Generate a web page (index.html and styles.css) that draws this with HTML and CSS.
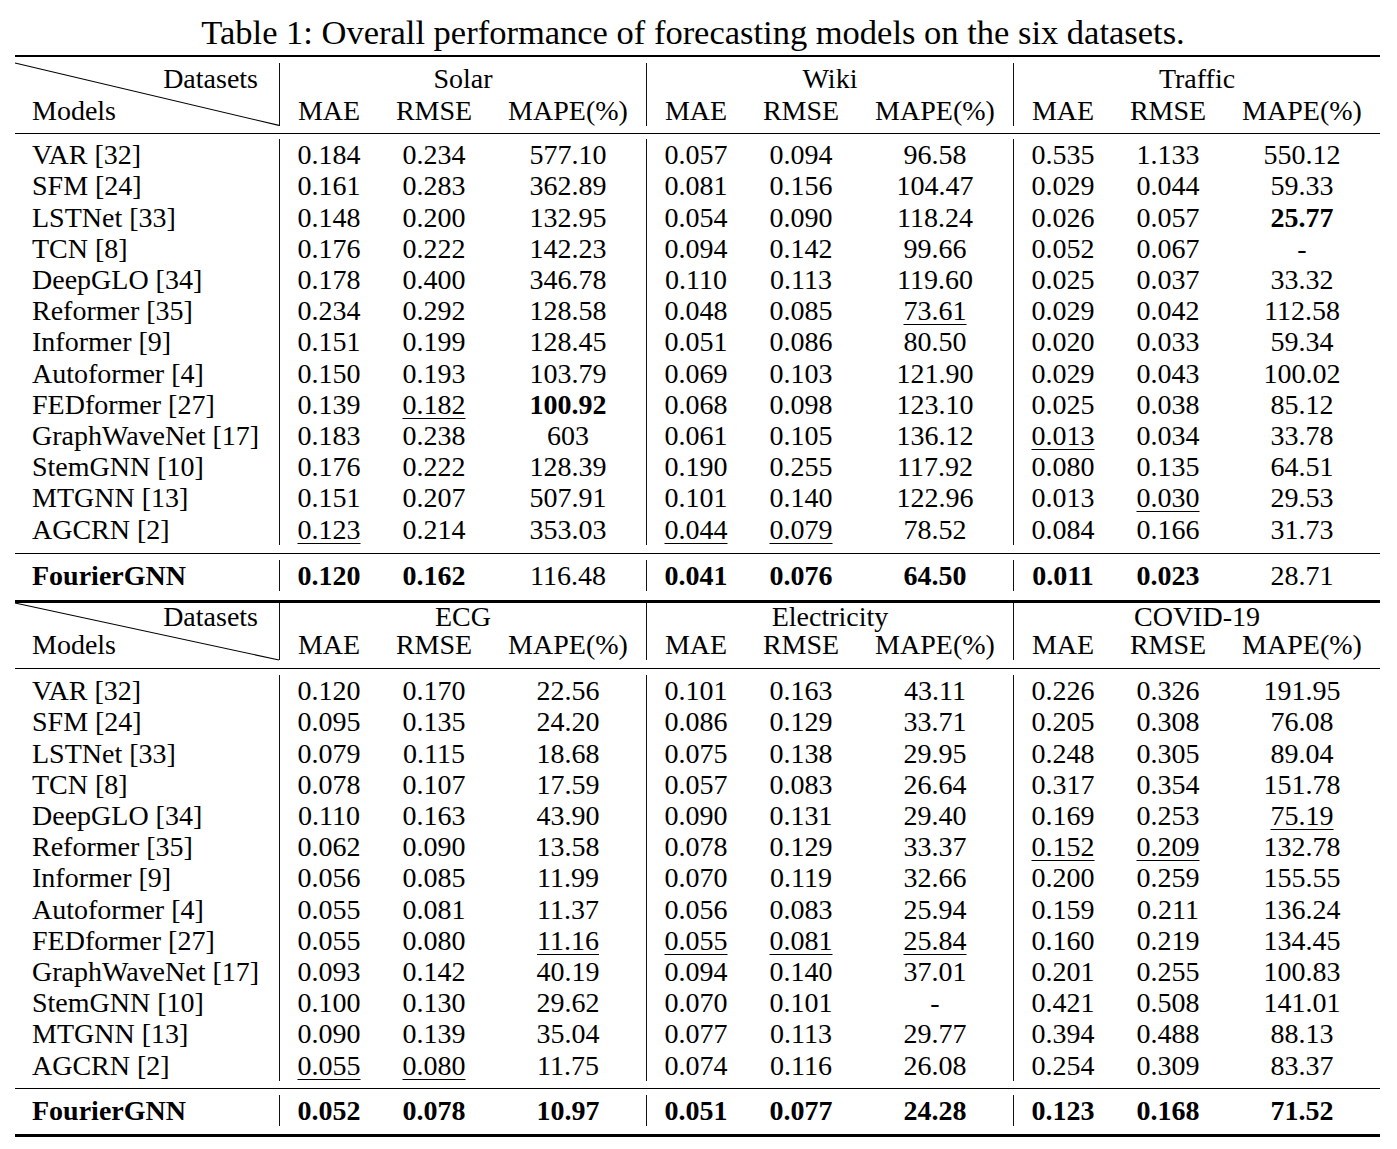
FILE: index.html
```html
<!DOCTYPE html>
<html>
<head>
<meta charset="utf-8">
<link rel="stylesheet" href="styles.css">
</head>
<body>
<div class="caption">Table 1: Overall performance of forecasting models on the six datasets.</div>
<table class="tbl">
<colgroup>
<col class="c-m"><col class="c-mae"><col class="c-rmse"><col class="c-mape"><col class="c-mae"><col class="c-rmse"><col class="c-mape"><col class="c-mae"><col class="c-rmse"><col class="c-mape">
</colgroup>
<tbody>
<tr class="rule thick"><td colspan="10"></td></tr>
<tr class="sp s6"><td colspan="10"></td></tr>
<tr class="hd"><td class="diag" rowspan="2"><svg class="diag-line" preserveAspectRatio="none" viewBox="0 0 100 100"><line x1="0" y1="0" x2="100" y2="100" vector-effect="non-scaling-stroke"/></svg><div class="d-top">Datasets</div><div class="d-bot">Models</div></td><td class="g" colspan="3">Solar</td><td class="g" colspan="3">Wiki</td><td class="g" colspan="3">Traffic</td></tr>
<tr class="hd"><td class="g">MAE</td><td>RMSE</td><td>MAPE(%)</td><td class="g">MAE</td><td>RMSE</td><td>MAPE(%)</td><td class="g">MAE</td><td>RMSE</td><td>MAPE(%)</td></tr>
<tr class="sp s7"><td colspan="10"></td></tr>
<tr class="rule thin"><td colspan="10"></td></tr>
<tr class="sp s5"><td colspan="10"></td></tr>
<tr><td class="m">VAR [32]</td><td class="g">0.184</td><td>0.234</td><td>577.10</td><td class="g">0.057</td><td>0.094</td><td>96.58</td><td class="g">0.535</td><td>1.133</td><td>550.12</td></tr>
<tr><td class="m">SFM [24]</td><td class="g">0.161</td><td>0.283</td><td>362.89</td><td class="g">0.081</td><td>0.156</td><td>104.47</td><td class="g">0.029</td><td>0.044</td><td>59.33</td></tr>
<tr><td class="m">LSTNet [33]</td><td class="g">0.148</td><td>0.200</td><td>132.95</td><td class="g">0.054</td><td>0.090</td><td>118.24</td><td class="g">0.026</td><td>0.057</td><td><b>25.77</b></td></tr>
<tr><td class="m">TCN [8]</td><td class="g">0.176</td><td>0.222</td><td>142.23</td><td class="g">0.094</td><td>0.142</td><td>99.66</td><td class="g">0.052</td><td>0.067</td><td>-</td></tr>
<tr><td class="m">DeepGLO [34]</td><td class="g">0.178</td><td>0.400</td><td>346.78</td><td class="g">0.110</td><td>0.113</td><td>119.60</td><td class="g">0.025</td><td>0.037</td><td>33.32</td></tr>
<tr><td class="m">Reformer [35]</td><td class="g">0.234</td><td>0.292</td><td>128.58</td><td class="g">0.048</td><td>0.085</td><td><span class="u">73.61</span></td><td class="g">0.029</td><td>0.042</td><td>112.58</td></tr>
<tr><td class="m">Informer [9]</td><td class="g">0.151</td><td>0.199</td><td>128.45</td><td class="g">0.051</td><td>0.086</td><td>80.50</td><td class="g">0.020</td><td>0.033</td><td>59.34</td></tr>
<tr><td class="m">Autoformer [4]</td><td class="g">0.150</td><td>0.193</td><td>103.79</td><td class="g">0.069</td><td>0.103</td><td>121.90</td><td class="g">0.029</td><td>0.043</td><td>100.02</td></tr>
<tr><td class="m">FEDformer [27]</td><td class="g">0.139</td><td><span class="u">0.182</span></td><td><b>100.92</b></td><td class="g">0.068</td><td>0.098</td><td>123.10</td><td class="g">0.025</td><td>0.038</td><td>85.12</td></tr>
<tr><td class="m">GraphWaveNet [17]</td><td class="g">0.183</td><td>0.238</td><td>603</td><td class="g">0.061</td><td>0.105</td><td>136.12</td><td class="g"><span class="u">0.013</span></td><td>0.034</td><td>33.78</td></tr>
<tr><td class="m">StemGNN [10]</td><td class="g">0.176</td><td>0.222</td><td>128.39</td><td class="g">0.190</td><td>0.255</td><td>117.92</td><td class="g">0.080</td><td>0.135</td><td>64.51</td></tr>
<tr><td class="m">MTGNN [13]</td><td class="g">0.151</td><td>0.207</td><td>507.91</td><td class="g">0.101</td><td>0.140</td><td>122.96</td><td class="g">0.013</td><td><span class="u">0.030</span></td><td>29.53</td></tr>
<tr><td class="m">AGCRN [2]</td><td class="g"><span class="u">0.123</span></td><td>0.214</td><td>353.03</td><td class="g"><span class="u">0.044</span></td><td><span class="u">0.079</span></td><td>78.52</td><td class="g">0.084</td><td>0.166</td><td>31.73</td></tr>
<tr class="sp s8"><td colspan="10"></td></tr>
<tr class="rule thin"><td colspan="10"></td></tr>
<tr class="sp s6"><td colspan="10"></td></tr>
<tr><td class="m"><b>FourierGNN</b></td><td class="g"><b>0.120</b></td><td><b>0.162</b></td><td>116.48</td><td class="g"><b>0.041</b></td><td><b>0.076</b></td><td><b>64.50</b></td><td class="g"><b>0.011</b></td><td><b>0.023</b></td><td>28.71</td></tr>
<tr class="sp s9"><td colspan="10"></td></tr>
<tr class="rule thick"><td colspan="10"></td></tr>
<tr class="hd hd2a"><td class="diag diag2" rowspan="2"><svg class="diag-line" preserveAspectRatio="none" viewBox="0 0 100 100"><line x1="0" y1="0" x2="100" y2="100" vector-effect="non-scaling-stroke"/></svg><div class="d-top">Datasets</div><div class="d-bot">Models</div></td><td class="g" colspan="3">ECG</td><td class="g" colspan="3">Electricity</td><td class="g" colspan="3">COVID-19</td></tr>
<tr class="hd hd2b"><td class="g">MAE</td><td>RMSE</td><td>MAPE(%)</td><td class="g">MAE</td><td>RMSE</td><td>MAPE(%)</td><td class="g">MAE</td><td>RMSE</td><td>MAPE(%)</td></tr>
<tr class="sp s8"><td colspan="10"></td></tr>
<tr class="rule thin"><td colspan="10"></td></tr>
<tr class="sp s6"><td colspan="10"></td></tr>
<tr><td class="m">VAR [32]</td><td class="g">0.120</td><td>0.170</td><td>22.56</td><td class="g">0.101</td><td>0.163</td><td>43.11</td><td class="g">0.226</td><td>0.326</td><td>191.95</td></tr>
<tr><td class="m">SFM [24]</td><td class="g">0.095</td><td>0.135</td><td>24.20</td><td class="g">0.086</td><td>0.129</td><td>33.71</td><td class="g">0.205</td><td>0.308</td><td>76.08</td></tr>
<tr><td class="m">LSTNet [33]</td><td class="g">0.079</td><td>0.115</td><td>18.68</td><td class="g">0.075</td><td>0.138</td><td>29.95</td><td class="g">0.248</td><td>0.305</td><td>89.04</td></tr>
<tr><td class="m">TCN [8]</td><td class="g">0.078</td><td>0.107</td><td>17.59</td><td class="g">0.057</td><td>0.083</td><td>26.64</td><td class="g">0.317</td><td>0.354</td><td>151.78</td></tr>
<tr><td class="m">DeepGLO [34]</td><td class="g">0.110</td><td>0.163</td><td>43.90</td><td class="g">0.090</td><td>0.131</td><td>29.40</td><td class="g">0.169</td><td>0.253</td><td><span class="u">75.19</span></td></tr>
<tr><td class="m">Reformer [35]</td><td class="g">0.062</td><td>0.090</td><td>13.58</td><td class="g">0.078</td><td>0.129</td><td>33.37</td><td class="g"><span class="u">0.152</span></td><td><span class="u">0.209</span></td><td>132.78</td></tr>
<tr><td class="m">Informer [9]</td><td class="g">0.056</td><td>0.085</td><td>11.99</td><td class="g">0.070</td><td>0.119</td><td>32.66</td><td class="g">0.200</td><td>0.259</td><td>155.55</td></tr>
<tr><td class="m">Autoformer [4]</td><td class="g">0.055</td><td>0.081</td><td>11.37</td><td class="g">0.056</td><td>0.083</td><td>25.94</td><td class="g">0.159</td><td>0.211</td><td>136.24</td></tr>
<tr><td class="m">FEDformer [27]</td><td class="g">0.055</td><td>0.080</td><td><span class="u">11.16</span></td><td class="g"><span class="u">0.055</span></td><td><span class="u">0.081</span></td><td><span class="u">25.84</span></td><td class="g">0.160</td><td>0.219</td><td>134.45</td></tr>
<tr><td class="m">GraphWaveNet [17]</td><td class="g">0.093</td><td>0.142</td><td>40.19</td><td class="g">0.094</td><td>0.140</td><td>37.01</td><td class="g">0.201</td><td>0.255</td><td>100.83</td></tr>
<tr><td class="m">StemGNN [10]</td><td class="g">0.100</td><td>0.130</td><td>29.62</td><td class="g">0.070</td><td>0.101</td><td>-</td><td class="g">0.421</td><td>0.508</td><td>141.01</td></tr>
<tr><td class="m">MTGNN [13]</td><td class="g">0.090</td><td>0.139</td><td>35.04</td><td class="g">0.077</td><td>0.113</td><td>29.77</td><td class="g">0.394</td><td>0.488</td><td>88.13</td></tr>
<tr><td class="m">AGCRN [2]</td><td class="g"><span class="u">0.055</span></td><td><span class="u">0.080</span></td><td>11.75</td><td class="g">0.074</td><td>0.116</td><td>26.08</td><td class="g">0.254</td><td>0.309</td><td>83.37</td></tr>
<tr class="sp s7"><td colspan="10"></td></tr>
<tr class="rule thin"><td colspan="10"></td></tr>
<tr class="sp s6"><td colspan="10"></td></tr>
<tr><td class="m"><b>FourierGNN</b></td><td class="g"><b>0.052</b></td><td><b>0.078</b></td><td><b>10.97</b></td><td class="g"><b>0.051</b></td><td><b>0.077</b></td><td><b>24.28</b></td><td class="g"><b>0.123</b></td><td><b>0.168</b></td><td><b>71.52</b></td></tr>
<tr class="sp s8"><td colspan="10"></td></tr>
<tr class="rule thick"><td colspan="10"></td></tr>
</tbody>
</table>
</body>
</html>
```

FILE: styles.css
```css
html, body {
  margin: 0;
  padding: 0;
  background: #ffffff;
}

body {
  font-family: "Liberation Serif", "Times New Roman", Times, serif;
  color: #000000;
}

.caption {
  width: 1365px;
  margin-left: 15px;
  padding-top: 13px;
  padding-right: 9px;
  box-sizing: border-box;
  height: 51px;
  font-size: 34.5px;
  line-height: 38px;
  text-align: center;
  white-space: nowrap;
}

.tbl {
  margin-top: 4px;
  margin-left: 15px;
  width: 1365px;
  border-collapse: separate;
  border-spacing: 0;
  table-layout: fixed;
  font-size: 28px;
  line-height: 31.2px;
}

.c-m { width: 264px; }
.c-mae { width: 99px; }
.c-rmse { width: 112px; }
.c-mape { width: 156px; }

.tbl td {
  padding: 0;
  text-align: center;
  white-space: nowrap;
  vertical-align: middle;
}

.tbl td.m {
  text-align: left;
  padding-left: 17px;
}

.tbl td.g {
  border-left: 1.2px solid #111111;
}

.tbl b {
  font-weight: bold;
}

.u {
  text-decoration: underline;
  text-decoration-thickness: 1px;
  text-underline-offset: 4px;
}

.sp td {
  font-size: 0;
  line-height: 0;
}
.s5 td { height: 5px; }
.s6 td { height: 6px; }
.s7 td { height: 7px; }
.s8 td { height: 8px; }
.s9 td { height: 9px; }

.rule td {
  font-size: 0;
  line-height: 0;
  background: #000000;
}
.rule.thick td { height: 2.4px; }
.rule.thin td { height: 1.4px; }

.hd2a td {
  line-height: 27px;
}

.hd2b td {
  line-height: 30px;
}

.tbl td.diag {
  position: relative;
  text-align: left;
  vertical-align: top;
  padding: 0;
}

.diag-line {
  position: absolute;
  left: 0;
  top: 0;
  width: 100%;
  height: 100%;
  overflow: visible;
}

.diag-line line {
  stroke: #000000;
  stroke-width: 1.1;
}

.d-top {
  text-align: right;
  padding-right: 21px;
}

.d-bot {
  text-align: left;
  padding-left: 17px;
}

.diag2 .d-top {
  line-height: 27px;
}

.diag2 .d-bot {
  line-height: 30px;
}
```
